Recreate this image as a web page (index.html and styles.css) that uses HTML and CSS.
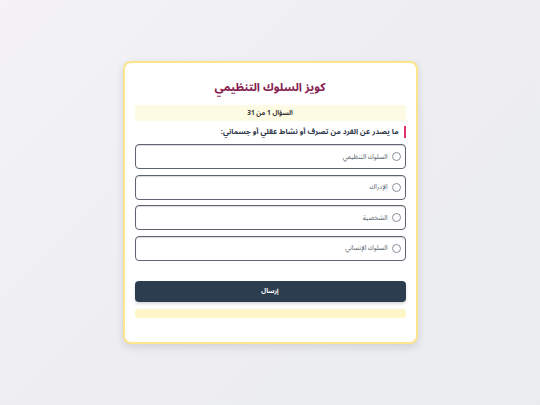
FILE: index.html
```html
<!DOCTYPE html>
<html lang="ar" dir="rtl">
<head>
    <meta charset="UTF-8">
    <meta name="viewport" content="width=device-width, initial-scale=1.0">
    <title>كويز السلوك التنظيمي</title>
    <link rel="stylesheet" href="styles.css">
</head>
<body>
<div class="quiz-card">
    <h1 class="quiz-title">كويز السلوك التنظيمي</h1>
    <div class="counter">السؤال 1 من 31</div>
    <div class="question">ما يصدر عن الفرد من تصرف أو نشاط عقلي أو جسماني:</div>
    <div class="options">
        <label class="option"><input type="radio" name="answer"> <span>السلوك التنظيمي</span></label>
        <label class="option"><input type="radio" name="answer"> <span>الإدراك</span></label>
        <label class="option"><input type="radio" name="answer"> <span>الشخصية</span></label>
        <label class="option"><input type="radio" name="answer"> <span>السلوك الإنساني</span></label>
    </div>
    <button class="submit-button">إرسال</button>
    <div class="feedback"></div>
</div>
</body>
</html>
```

FILE: styles.css
```css
body {
    font-family: "Noto Sans Arabic", "Noto Sans", sans-serif;
    background: linear-gradient(135deg, #f4f2f6 0%, #eeeef2 50%, #eaecef 100%);
    margin: 0;
    padding: 0;
    height: 100vh;
    display: flex;
    justify-content: center;
    align-items: flex-start;
    color: #1f2937;
}
.quiz-card {
    width: 295px;
    box-sizing: border-box;
    margin-top: 61px;
    background-color: #ffffff;
    border: 2px solid #fbe68c;
    border-radius: 8px;
    padding: 14px 10px 24px;
    box-shadow: 0 3px 8px rgba(0, 0, 0, 0.12);
}
.quiz-title {
    font-size: 11.5px;
    font-weight: bold;
    color: #86204f;
    text-align: center;
    margin: 0 0 8px;
    line-height: 20px;
}
.counter {
    background-color: #fefbe4;
    text-align: center;
    font-size: 6.5px;
    font-weight: bold;
    color: #333;
    height: 16px;
    line-height: 16px;
    border-radius: 2px;
}
.question {
    font-size: 7.5px;
    font-weight: bold;
    color: #2d3748;
    border-right: 2px solid #e0336f;
    padding-right: 5px;
    margin: 5px 0 6px;
    line-height: 12px;
}
.options {
    display: flex;
    flex-direction: column;
    gap: 5.5px;
}
.option {
    display: flex;
    align-items: center;
    gap: 4px;
    height: 25px;
    box-sizing: border-box;
    border: 1px solid #5d6470;
    border-radius: 4px;
    padding: 0 4px;
    font-size: 6.5px;
    color: #4b5563;
    box-shadow: inset 0 1px 1px rgba(0, 0, 0, 0.15);
}
.option input {
    appearance: none;
    margin: 0;
    width: 9px;
    height: 9px;
    border: 1px solid #8a8f98;
    border-radius: 50%;
    box-sizing: border-box;
}
.submit-button {
    display: block;
    width: 100%;
    height: 21px;
    margin-top: 20px;
    background-color: #2d3d50;
    color: #ffffff;
    border: none;
    border-radius: 4px;
    font-family: inherit;
    font-size: 6.5px;
    font-weight: bold;
    box-shadow: 0 2px 3px rgba(0, 0, 0, 0.15);
}
.feedback {
    margin-top: 7px;
    height: 9px;
    background-color: #fef6c8;
    border-radius: 3px;
}
```
